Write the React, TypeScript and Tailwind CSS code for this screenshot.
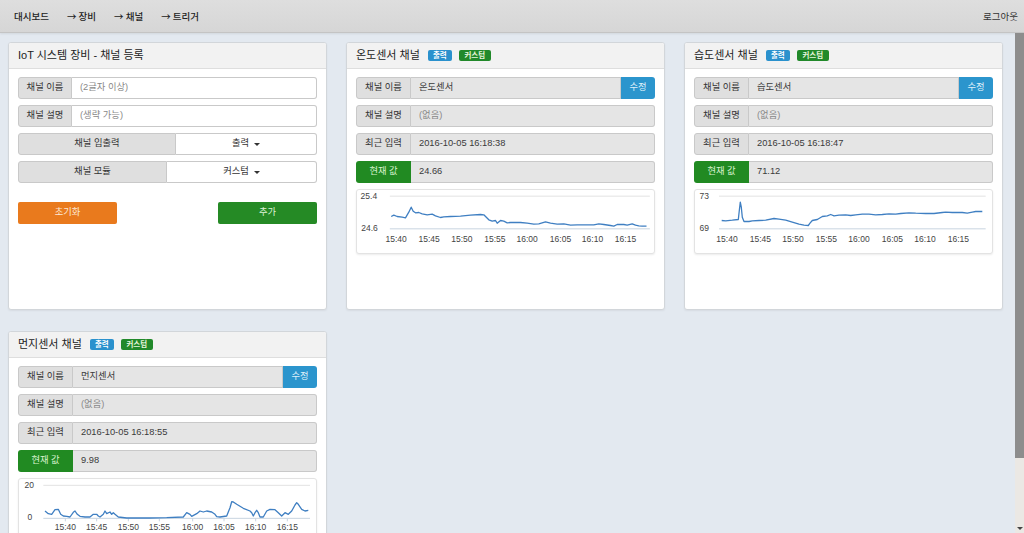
import React from "react";

type Pt = [number, number];

type ChartSpec = {
  ox: number;
  oy: number;
  pts: Pt[];
  gridY: number;
  axisY: number;
  x0: number;
  x1: number;
  yTop: { t: string; x: number; y: number };
  yBot: { t: string; x: number; y: number };
  xs: number[];
  xlY: number;
  ticks?: boolean;
};

const XL = ["15:40", "15:45", "15:50", "15:55", "16:00", "16:05", "16:10", "16:15"];

function Chart({ s }: { s: ChartSpec }) {
  const tx = (x: number) => x / 3 + s.ox;
  const ty = (y: number) => y / 3 + s.oy;
  const d = s.pts.map(([x, y], i) => `${i ? "L" : "M"}${tx(x).toFixed(1)} ${ty(y).toFixed(1)}`).join(" ");
  return (
    <div className="h-[65px] rounded-[3px] border border-[#e3e3e3] bg-white shadow-[0_1px_2px_rgba(0,0,0,0.08)]">
      <svg width="100%" height="63" viewBox="0 0 297 63" preserveAspectRatio="none" className="block">
        <line x1={tx(s.x0)} x2={tx(s.x1)} y1={ty(s.gridY)} y2={ty(s.gridY)} stroke="#e2e2e2" strokeWidth="1" />
        <line x1={tx(s.x0)} x2={tx(s.x1)} y1={ty(s.axisY)} y2={ty(s.axisY)} stroke="#c8d4e0" strokeWidth="1" />
        {s.ticks &&
          s.xs.map((x) => (
            <line key={x} x1={tx(x)} x2={tx(x)} y1={ty(s.axisY)} y2={ty(s.axisY) + 3} stroke="#c8d4e0" strokeWidth="1" />
          ))}
        <path d={d} fill="none" stroke="#3f7fc2" strokeWidth="1.3" strokeLinejoin="round" />
        <text x={tx(s.yTop.x)} y={ty(s.yTop.y)} textAnchor="end" fontSize="8.5" fill="#444" fontFamily="Liberation Sans, sans-serif">
          {s.yTop.t}
        </text>
        <text x={tx(s.yBot.x)} y={ty(s.yBot.y)} textAnchor="end" fontSize="8.5" fill="#444" fontFamily="Liberation Sans, sans-serif">
          {s.yBot.t}
        </text>
        {s.xs.map((x, i) => (
          <text key={i} x={tx(x)} y={ty(s.xlY)} textAnchor="middle" fontSize="8.5" fill="#444" fontFamily="Liberation Sans, sans-serif">
            {XL[i]}
          </text>
        ))}
      </svg>
    </div>
  );
}

const temp: ChartSpec = {
  ox: -16.5,
  oy: -9.5,
  gridY: 47,
  axisY: 145,
  x0: 148,
  x1: 928,
  yTop: { t: "25.4", x: 110, y: 56 },
  yBot: { t: "24.6", x: 112, y: 151 },
  xs: [167, 266, 364, 463, 560, 660, 756, 855],
  xlY: 184,
  pts: [
    [152, 108], [160, 104], [170, 108], [185, 110], [195, 112], [205, 95], [212, 80], [218, 92], [225, 97], [235, 96],
    [245, 100], [260, 103], [275, 101], [285, 106], [300, 111], [310, 109], [330, 108], [360, 107], [390, 104], [420, 102],
    [430, 103], [445, 118], [455, 122], [465, 120], [470, 128], [480, 120], [490, 122], [500, 127], [510, 126], [540, 126],
    [560, 128], [580, 131], [595, 130], [615, 124], [630, 128], [650, 131], [670, 130], [690, 134], [710, 133], [740, 133],
    [760, 133], [775, 130], [790, 132], [810, 135], [820, 137], [830, 132], [850, 132], [860, 134], [875, 130], [885, 134],
    [895, 136], [905, 137], [918, 137],
  ],
};

const hum: ChartSpec = {
  ox: -16,
  oy: -9.5,
  gridY: 47,
  axisY: 145,
  x0: 120,
  x1: 920,
  yTop: { t: "73", x: 90, y: 56 },
  yBot: { t: "69", x: 90, y: 151 },
  xs: [144, 244, 342, 442, 540, 640, 738, 838],
  xlY: 184,
  pts: [
    [128, 120], [140, 121], [160, 119], [178, 117], [181, 90], [184, 65], [187, 80], [190, 110], [195, 123], [210, 123],
    [220, 121], [240, 120], [260, 119], [285, 114], [300, 116], [320, 119], [340, 125], [360, 131], [375, 134], [388, 135],
    [393, 128], [400, 120], [415, 117], [430, 108], [445, 106], [455, 102], [465, 106], [480, 104], [500, 103], [515, 105],
    [530, 103], [550, 101], [570, 101], [590, 103], [610, 102], [630, 100], [650, 101], [665, 99], [690, 97], [710, 98],
    [740, 99], [765, 99], [790, 96], [800, 95], [820, 96], [850, 96], [865, 98], [880, 95], [890, 93], [910, 93],
  ],
};

const dust: ChartSpec = {
  ox: -19,
  oy: -48,
  gridY: 163,
  axisY: 262,
  x0: 130,
  x1: 930,
  yTop: { t: "20", x: 102, y: 171 },
  yBot: { t: "0", x: 97, y: 266 },
  xs: [196, 290, 385, 478, 578, 672, 767, 862],
  xlY: 298,
  ticks: true,
  pts: [
    [135, 240], [145, 248], [155, 250], [165, 236], [175, 235], [182, 250], [190, 255], [200, 256], [210, 258], [220, 244],
    [225, 240], [232, 250], [240, 256], [255, 258], [270, 258], [280, 250], [290, 250], [295, 255], [300, 258], [310, 250],
    [315, 240], [320, 248], [330, 243], [335, 250], [340, 245], [345, 250], [355, 258], [380, 261], [450, 261], [500, 260],
    [550, 258], [560, 245], [570, 250], [575, 256], [590, 248], [600, 240], [610, 243], [620, 240], [635, 243], [645, 250],
    [650, 257], [660, 258], [680, 255], [690, 230], [695, 212], [700, 213], [710, 220], [730, 232], [750, 240], [755, 245],
    [760, 255], [765, 245], [770, 238], [775, 245], [780, 258], [790, 258], [800, 240], [810, 235], [825, 236], [835, 245],
    [845, 255], [855, 245], [865, 250], [875, 240], [885, 222], [890, 215], [895, 220], [905, 235], [915, 240], [925, 238],
  ],
};

function Caret() {
  return <span className="ml-[5px] inline-block h-0 w-0 border-x-[3px] border-t-[3px] border-x-transparent border-t-[#333] align-middle" />;
}

function Badges() {
  return (
    <div className="ml-[8px] flex items-center gap-[7px]">
      <span className="flex h-[11px] w-[24px] items-center justify-center rounded-[2px] bg-[#2a91cd] text-[7.5px] font-bold text-white">출력</span>
      <span className="flex h-[11px] w-[32px] items-center justify-center rounded-[2px] bg-[#21892a] text-[7.5px] font-bold text-[#e6f5dc]">커스텀</span>
    </div>
  );
}

function Card({ title, badges, children }: { title: string; badges?: boolean; children: React.ReactNode }) {
  return (
    <div className="flex h-[268px] flex-col overflow-hidden rounded-[3px] border border-[#d2d6da] bg-white shadow-[0_1px_2px_rgba(0,0,0,0.06)]">
      <div className="flex h-[26px] shrink-0 items-center border-b border-[#dedede] bg-[#f2f2f2] px-[9px] text-[11px] text-[#222]">
        <span>{title}</span>
        {badges && <Badges />}
      </div>
      <div className="flex flex-col gap-[6px] px-[9px] pt-[8px]">{children}</div>
    </div>
  );
}

function InfoRow({ label, value, muted, edit, green }: { label: string; value: string; muted?: boolean; edit?: boolean; green?: boolean }) {
  return (
    <div className="flex h-[22px] text-[9.3px]">
      <div
        className={
          green
            ? "flex w-[55px] shrink-0 items-center justify-center rounded-l-[3px] bg-[#218a22] text-[#d9f3cf]"
            : "flex w-[55px] shrink-0 items-center justify-center rounded-l-[3px] border border-[#c9c9c9] bg-[#dfdfdf] text-[#333]"
        }
      >
        {label}
      </div>
      <div
        className={
          (edit ? "" : "rounded-r-[3px] ") +
          "flex flex-1 items-center border border-l-0 border-[#c9c9c9] bg-[#e5e5e5] pl-[8px] " +
          (muted ? "text-[#888]" : "text-[#3a3a3a]")
        }
      >
        {value}
      </div>
      {edit && (
        <div className="flex w-[34px] shrink-0 items-center justify-center rounded-r-[3px] bg-[#2b95cd] text-[#dff0fa]">수정</div>
      )}
    </div>
  );
}

function SensorCard({ title, name, time, value, spec }: { title: string; name: string; time: string; value: string; spec: ChartSpec }) {
  return (
    <Card title={title} badges>
      <InfoRow label="채널 이름" value={name} edit />
      <InfoRow label="채널 설명" value="(없음)" muted />
      <InfoRow label="최근 입력" value={time} />
      <InfoRow label="현재 값" value={value} green />
      <Chart s={spec} />
    </Card>
  );
}

function InputRow({ label, placeholder }: { label: string; placeholder: string }) {
  return (
    <div className="flex h-[22px] text-[9.3px]">
      <div className="flex w-[54px] shrink-0 items-center justify-center rounded-l-[3px] border border-[#c9c9c9] bg-[#dfdfdf] text-[#333]">{label}</div>
      <div className="flex flex-1 items-center rounded-r-[3px] border border-l-0 border-[#c9c9c9] bg-white pl-[8px] text-[#888]">{placeholder}</div>
    </div>
  );
}

function SelectRow({ label, value, lw }: { label: string; value: string; lw: string }) {
  return (
    <div className="flex h-[22px] text-[9.3px]">
      <div className={lw + " flex shrink-0 items-center justify-center rounded-l-[3px] border border-[#c9c9c9] bg-[#dfdfdf] text-[#333]"}>{label}</div>
      <div className="flex flex-1 items-center justify-center rounded-r-[3px] border border-l-0 border-[#c9c9c9] bg-white text-[#333]">
        {value}
        <Caret />
      </div>
    </div>
  );
}

export default function App() {
  return (
    <div className="flex h-[533px] w-[1024px] flex-col overflow-hidden bg-[#e3e9f0] font-['Liberation_Sans','Noto_Sans_CJK_KR',sans-serif]">
      <div className="flex h-[33px] shrink-0 items-center justify-between border-b border-[#c4c4c4] bg-gradient-to-b from-[#dedede] to-[#d6d6d6] px-[14px] font-['Noto_Sans_CJK_KR',sans-serif] text-[9.5px] text-[#222] shadow-[0_1px_2px_rgba(0,0,0,0.08)]">
        <div className="flex items-center font-medium">
          <span>대시보드</span>
          <span className="ml-[18px]">→ 장비</span>
          <span className="ml-[18px]">→ 채널</span>
          <span className="ml-[18px]">→ 트리거</span>
        </div>
        <span className="-mr-[8px] text-[#333]">로그아웃</span>
      </div>
      <div className="flex min-h-0 flex-1">
        <div className="min-w-0 flex-1 overflow-hidden">
          <div className="grid grid-cols-[319px_319px_319px] gap-x-[19px] gap-y-[21px] pl-[8px] pt-[9px]">
            <Card title="IoT 시스템 장비 - 채널 등록">
              <InputRow label="채널 이름" placeholder="(2글자 이상)" />
              <InputRow label="채널 설명" placeholder="(생략 가능)" />
              <SelectRow label="채널 입출력" value="출력" lw="w-[158px]" />
              <SelectRow label="채널 모듈" value="커스텀" lw="w-[149px]" />
              <div className="mt-[13px] flex justify-between text-[9.3px]">
                <div className="flex h-[22px] w-[99px] items-center justify-center rounded-[2px] bg-[#e97a1d] text-[#fde9d6]">초기화</div>
                <div className="flex h-[22px] w-[99px] items-center justify-center rounded-[2px] bg-[#258a25] text-[#dff3d8]">추가</div>
              </div>
            </Card>
            <SensorCard title="온도센서 채널" name="온도센서" time="2016-10-05 16:18:38" value="24.66" spec={temp} />
            <SensorCard title="습도센서 채널" name="습도센서" time="2016-10-05 16:18:47" value="71.12" spec={hum} />
            <SensorCard title="먼지센서 채널" name="먼지센서" time="2016-10-05 16:18:55" value="9.98" spec={dust} />
          </div>
        </div>
        <div className="flex w-[9px] shrink-0 flex-col bg-[#ebe8e4]">
          <div className="h-[425px] bg-[#8d8d8d]" />
          <div className="flex-1" />
          <div className="flex h-[10px] items-center justify-center">
            <span className="h-0 w-0 border-x-[3px] border-t-[3px] border-x-transparent border-t-[#444]" />
          </div>
        </div>
      </div>
    </div>
  );
}
